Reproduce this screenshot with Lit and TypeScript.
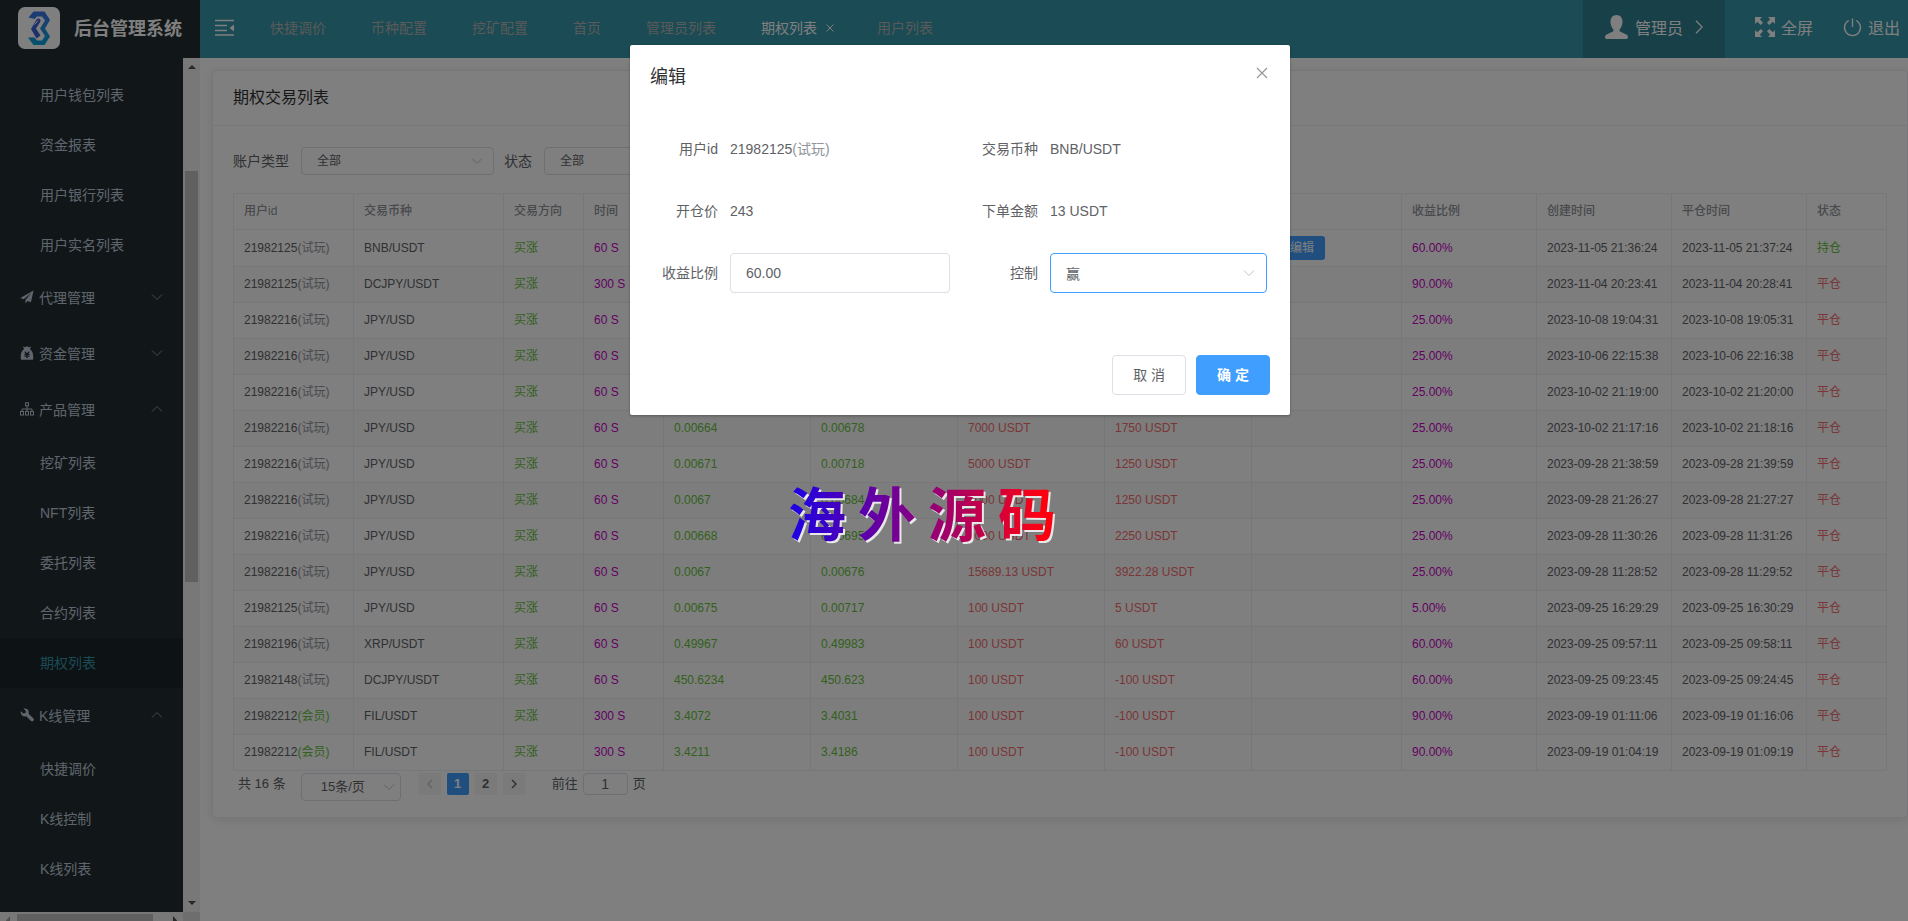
import { LitElement, html, css, svg, nothing } from "lit";
import { customElement, state } from "lit/decorators.js";
import { classMap } from "lit/directives/class-map.js";

interface Trade {
  id: string;
  kind: string;
  pair: string;
  time: string;
  open: string;
  close: string;
  amount: string;
  profit: string;
  rate: string;
  created: string;
  closed: string;
  holding?: boolean;
}

const trade = (
  id: string, pair: string, time: string, open: string, close: string,
  amount: string, profit: string, rate: string, created: string, closed: string,
  kind = "试玩", holding = false,
): Trade => ({ id, pair, time, open, close, amount, profit, rate, created, closed, kind, holding });

const TRADES: Trade[] = [
  trade("21982125", "BNB/USDT", "60 S", "243", "", "13 USDT", "", "60.00%", "2023-11-05 21:36:24", "2023-11-05 21:37:24", "试玩", true),
  trade("21982125", "DCJPY/USDT", "300 S", "", "", "", "", "90.00%", "2023-11-04 20:23:41", "2023-11-04 20:28:41"),
  trade("21982216", "JPY/USD", "60 S", "", "", "", "", "25.00%", "2023-10-08 19:04:31", "2023-10-08 19:05:31"),
  trade("21982216", "JPY/USD", "60 S", "", "", "", "", "25.00%", "2023-10-06 22:15:38", "2023-10-06 22:16:38"),
  trade("21982216", "JPY/USD", "60 S", "", "", "", "", "25.00%", "2023-10-02 21:19:00", "2023-10-02 21:20:00"),
  trade("21982216", "JPY/USD", "60 S", "0.00664", "0.00678", "7000 USDT", "1750 USDT", "25.00%", "2023-10-02 21:17:16", "2023-10-02 21:18:16"),
  trade("21982216", "JPY/USD", "60 S", "0.00671", "0.00718", "5000 USDT", "1250 USDT", "25.00%", "2023-09-28 21:38:59", "2023-09-28 21:39:59"),
  trade("21982216", "JPY/USD", "60 S", "0.0067", "0.00684", "5000 USDT", "1250 USDT", "25.00%", "2023-09-28 21:26:27", "2023-09-28 21:27:27"),
  trade("21982216", "JPY/USD", "60 S", "0.00668", "0.00695", "9000 USDT", "2250 USDT", "25.00%", "2023-09-28 11:30:26", "2023-09-28 11:31:26"),
  trade("21982216", "JPY/USD", "60 S", "0.0067", "0.00676", "15689.13 USDT", "3922.28 USDT", "25.00%", "2023-09-28 11:28:52", "2023-09-28 11:29:52"),
  trade("21982125", "JPY/USD", "60 S", "0.00675", "0.00717", "100 USDT", "5 USDT", "5.00%", "2023-09-25 16:29:29", "2023-09-25 16:30:29"),
  trade("21982196", "XRP/USDT", "60 S", "0.49967", "0.49983", "100 USDT", "60 USDT", "60.00%", "2023-09-25 09:57:11", "2023-09-25 09:58:11"),
  trade("21982148", "DCJPY/USDT", "60 S", "450.6234", "450.623", "100 USDT", "-100 USDT", "60.00%", "2023-09-25 09:23:45", "2023-09-25 09:24:45"),
  trade("21982212", "FIL/USDT", "300 S", "3.4072", "3.4031", "100 USDT", "-100 USDT", "90.00%", "2023-09-19 01:11:06", "2023-09-19 01:16:06", "会员"),
  trade("21982212", "FIL/USDT", "300 S", "3.4211", "3.4186", "100 USDT", "-100 USDT", "90.00%", "2023-09-19 01:04:19", "2023-09-19 01:09:19", "会员"),
];

const COLUMNS: [string, string][] = [
  ["用户id", "c120"], ["交易币种", "c150"], ["交易方向", "c80"], ["时间", "c80"],
  ["开仓价", "c147"], ["平仓价", "c147"], ["下单金额", "c147"], ["盈亏", "c147"],
  ["", "c150"], ["收益比例", "c135"], ["创建时间", "c135"], ["平仓时间", "c135"], ["状态", "c80"],
];

const MENU_ICONS = {
  plane: svg`<path d="M13.6.6.3 7.9l3.4 1.3L11.3 3 5.4 9.9v3.7l2.1-2.7 3.4 1.4z" fill="currentColor"/>`,
  bag: svg`<path d="M3 .6 5 1.2 7 .2l2 1 2-.6L10 3.2C12 4.6 13.200 7 13.200 10V13a.8.8 0 0 1-.8.8H1.600A.8.8 0 0 1 .8 13v-3C.8 7 2 4.600 4 3.200z" fill="currentColor"/><path d="M4.800 5.600 7 8.200l2.200-2.600M4.500 8.400h5M4.500 10.200h5M7 8.200v4" fill="none" stroke="#222d32" stroke-width="1.200"/>`,
  tree: svg`<g fill="none" stroke="currentColor" stroke-width="1"><rect x="5.500" y=".8" width="3" height="3"/><rect x=".5" y="9.500" width="3" height="3.500"/><rect x="5.500" y="9.500" width="3" height="3.500"/><rect x="10.500" y="9.500" width="3" height="3.500"/><path d="M7 4v5.500M2 9.500V7h10v2.500"/></g>`,
  wrench: svg`<path d="M.9 3.200 3.300 5.500 5.500 5 5.900 3 3.600.8C5.700.1 7.700 1 8.500 2.900c.4 1 .4 1.900.1 2.800l4.700 4.600a1.700 1.700 0 0 1-2.500 2.500L6.200 8.200C3.200 9.200-.1 6.800.9 3.200z" fill="currentColor"/>`,
};

interface MenuGroup { icon?: keyof typeof MENU_ICONS; title?: string; open?: boolean; items: string[]; }

const MENU: MenuGroup[] = [
  { items: ["用户钱包列表", "资金报表", "用户银行列表", "用户实名列表"] },
  { icon: "plane", title: "代理管理", items: [] },
  { icon: "bag", title: "资金管理", items: [] },
  { icon: "tree", title: "产品管理", open: true, items: ["挖矿列表", "NFT列表", "委托列表", "合约列表", "期权列表"] },
  { icon: "wrench", title: "K线管理", open: true, items: ["快捷调价", "K线控制", "K线列表"] },
];

const TABS = ["快捷调价", "币种配置", "挖矿配置", "首页", "管理员列表", "期权列表", "用户列表"];

const base = css`
  * { box-sizing: border-box; }
  button, input, select { font: inherit; color: inherit; margin: 0; outline: none; }
  button { cursor: pointer; padding: 0; border: 0; background: none; }
  a { color: inherit; text-decoration: none; }
  svg { display: block; flex: none; }
  .picker { position: relative; display: block; }
  .picker select {
    appearance: none; display: block; width: 100%; height: 100%;
    border: 1px solid #dcdfe6; border-radius: 4px; background: #fff; color: #606266;
  }
  .picker svg { position: absolute; top: 0; bottom: 0; margin: auto; color: #c0c4cc; pointer-events: none; }
`;

const chevron = (cls = "") => html`
  <svg class=${cls} width="12" height="8" viewBox="0 0 12 8" aria-hidden="true">
    <path d="M1 1.500 6 6.500 11 1.500" fill="none" stroke="currentColor"/>
  </svg>`;

@customElement("side-menu")
class SideMenu extends LitElement {
  static styles = [base, css`
    :host { display: grid; grid-template-columns: 183px 17px; grid-template-rows: minmax(0, 1fr) 9px; min-height: 0; }
    nav { background: #222d32; color: #bfcbd9; padding-top: 12px; overflow: hidden; }
    ul { list-style: none; margin: 0; padding: 0; }
    .item { display: flex; align-items: center; height: 50px; padding: 0 0 2px 40px; }
    .item.active { background: #1b2428; color: #3696a8; }
    .group { display: flex; align-items: center; gap: 5px; width: 100%; height: 56px; padding: 0 20px 2px; }
    .arrow { margin-left: auto; color: #909399; }
    .arrow.up { transform: rotate(180deg); }
    .bar-v { display: flex; flex-direction: column; align-items: center; background: #f1f1f1; padding: 6px 0; color: #505050; }
    .bar-v .thumb { width: 13px; background: #c1c1c1; margin-top: 101px; flex: 0 1 411px; }
    .bar-v .down { margin-top: auto; }
    .bar-h { display: flex; align-items: flex-start; background: #f1f1f1; overflow: hidden; color: #505050; }
    .bar-h .thumb { width: 136px; height: 13px; margin-top: 2px; background: #c1c1c1; }
    .bar-h svg { margin: 4px 5px; }
    .bar-h .left { color: #a3a3a3; }
    .corner { background: #dcdcdc; }
  `];

  render() {
    return html`
      <nav aria-label="主菜单">
        <ul>${MENU.map((g) => html`
          <li>
            ${g.title ? html`
              <button class="group" aria-expanded=${g.open ? "true" : "false"}>
                <svg width="14" height="14" viewBox="0 0 14 14" aria-hidden="true">${MENU_ICONS[g.icon!]}</svg>
                <span>${g.title}</span>${chevron(g.open ? "arrow up" : "arrow")}
              </button>` : nothing}
            <ul>${g.items.map((t) => html`
              <li><a href="#" class=${classMap({ item: true, active: t === "期权列表" })}>${t}</a></li>`)}
            </ul>
          </li>`)}
        </ul>
      </nav>
      <div class="bar-v">
        <svg width="8" height="6" viewBox="0 0 8 6"><path d="M0 5 4 1l4 4z" fill="currentColor"/></svg>
        <div class="thumb"></div>
        <svg class="down" width="8" height="6" viewBox="0 0 8 6"><path d="M0 1l4 4 4-4z" fill="currentColor"/></svg>
      </div>
      <div class="bar-h">
        <svg class="left" width="7" height="9" viewBox="0 0 7 9"><path d="M5 0 1 4.500 5 9z" fill="currentColor"/></svg>
        <div class="thumb"></div>
        <svg width="20" height="9" viewBox="0 0 20 9"><path d="M15 0l4 4.500L15 9z" fill="currentColor"/></svg>
      </div>
      <div class="corner"></div>`;
  }
}

@customElement("top-bar")
class TopBar extends LitElement {
  static styles = [base, css`
    :host { display: flex; height: 58px; background: #3696a8; color: #fff; }
    .brand { display: flex; align-items: center; width: 200px; flex: none; padding: 0 0 2px 18px; gap: 14px; background: #222d32; }
    .brand h1 { margin: 0; padding-bottom: 2px; font-size: 18px; font-weight: 700; white-space: nowrap; }
    .fold { padding: 0 16px 2px 15px; }
    .tabs { display: flex; }
    .tab { display: flex; align-items: center; gap: 6px; padding: 0 25px 4px 20px; color: #b4b4b4; }
    .tab.active { color: #fff; padding-right: 20px; }
    .close { width: 14px; height: 14px; padding-top: 2px; display: grid; place-items: center; }
    .tools { display: flex; align-items: center; margin-left: auto; padding-right: 8px; font-size: 16px; }
    .user { display: flex; align-items: center; gap: 7px; height: 100%; padding: 0 22px 4px; margin-right: 30px; background: rgba(0, 0, 0, 0.14); }
    .user span { margin-right: 5px; }
    .tool { display: flex; align-items: center; gap: 6px; padding-bottom: 4px; }
    .tool + .tool { margin-left: 30px; }
  `];

  render() {
    return html`
      <div class="brand">
        <svg width="42" height="42" viewBox="0 0 42 42" aria-hidden="true">
          <defs><linearGradient id="lg" x1="0" y1="0" x2="0" y2="1"><stop offset="0" stop-color="#3a72e8"/><stop offset=".4" stop-color="#2f86e0"/><stop offset="1" stop-color="#05a4dc"/></linearGradient></defs>
          <rect width="42" height="42" rx="7" fill="#fff"/>
          <path d="M10.500 10.500 15.500 4.500h11l5.500 8.500-5 8.500 5 8-5.500 8.500h-11L10 30.500h6.500l2.500 3h5l3-4.500-5-7.500 5-8-3-4h-5l-2.500 2.500z" fill="url(#lg)"/>
          <path d="M18.500 12.500c2-2 4.500-.5 4 2L18 21.500l4.500 7-4 3-5.500-9.500z" fill="#3f62d6"/>
          <path d="M16.500 17.500l3.500-4" stroke="#fff" stroke-width="1"/>
        </svg>
        <h1>后台管理系统</h1>
      </div>
      <button class="fold" aria-label="折叠菜单">
        <svg width="19" height="18" viewBox="0 0 19 18"><path d="M0 1.500h19M0 6.500h12M0 11.500h12M0 16h19" stroke="#fff" stroke-width="1.500"/><path d="M19 5.500v7L14.500 9z" fill="#fff"/></svg>
      </button>
      <nav class="tabs" aria-label="标签页">
        ${TABS.map((t) => {
          const active = t === "期权列表";
          return html`
          <a href="#" class=${classMap({ tab: true, active })}>${t}${active
            ? html`<span class="close"><svg width="8" height="8" viewBox="0 0 8 8"><path d="M.5.5l7 7M7.500.5l-7 7" stroke="#fff"/></svg></span>` : nothing}</a>`;
        })}
      </nav>
      <div class="tools">
        <button class="user">
          <svg width="23" height="24" viewBox="0 0 23 24"><path d="M11.500 0c3.800 0 6 2.800 6 6.800 0 3-1.200 6-2.900 7.600v1.800l6.700 3.200c1.100.5 1.700 1.400 1.700 2.600 0 1.200-.6 2-1.800 2H1.800C.6 24 0 23.200 0 22c0-1.200.6-2.100 1.700-2.600l6.700-3.200v-1.800C6.700 12.800 5.500 9.800 5.500 6.800 5.500 2.800 7.700 0 11.500 0z" fill="#fff"/></svg>
          <span>管理员</span>
          <svg width="8" height="14" viewBox="0 0 8 14"><path d="M1 .7 7.200 7 1 13.300" fill="none" stroke="#fff" stroke-width="1.300"/></svg>
        </button>
        <button class="tool">
          <svg width="20" height="20" viewBox="0 0 20 20"><g fill="#fff"><path d="M0 0h7L4.800 2.200 8 5.800 5.800 8 2.200 4.800 0 7z"/><path d="M20 0v7l-2.200-2.200L14.200 8 12 5.800l3.200-3.600L13 0z"/><path d="M20 20h-7l2.200-2.200L12 14.200l2.200-2.200 3.600 3.200L20 13z"/><path d="M0 20v-7l2.200 2.200L5.800 12 8 14.200l-3.200 3.600L7 20z"/></g></svg>
          <span>全屏</span>
        </button>
        <button class="tool">
          <svg width="19" height="19" viewBox="0 0 19 19"><path d="M5.800 2.500a8 8 0 1 0 7.400 0M9.500.5v8.500" fill="none" stroke="#fff" stroke-width="1.400"/></svg>
          <span>退出</span>
        </button>
      </div>`;
  }
}

@customElement("trade-card")
class TradeCard extends LitElement {
  static styles = [base, css`
    :host { display: block; border: 1px solid #ebeef5; border-radius: 4px; background: #fff; box-shadow: 0 2px 12px rgba(0, 0, 0, 0.1); }
    h2 { margin: 0; height: 55px; padding: 0 20px; border-bottom: 1px solid #ebeef5; font-size: 16px; font-weight: 400; line-height: 53px; color: #303133; }
    .body { padding: 20px; }
    .filters { display: flex; align-items: center; height: 30px; margin-bottom: 17px; }
    .filters label { margin-right: 12px; padding-bottom: 2px; color: #606266; }
    .filters .picker { width: 193px; height: 28px; margin-right: 10px; font-size: 12px; }
    .filters select { padding: 0 15px; }
    .filters svg { right: 11px; }
    table { width: 100%; table-layout: fixed; border-spacing: 0; border: 1px solid #ebeef5; border-width: 1px 0 0 1px; font-size: 12px; line-height: 23px; }
    th, td { padding: 6px 10px; border: 1px solid #ebeef5; border-width: 0 1px 1px 0; text-align: left; font-weight: 400; white-space: nowrap; }
    th { color: #909399; font-weight: 500; }
    tbody tr:nth-child(even) { background: #fafafa; }
    .c80 { width: 80px; } .c120 { width: 120px; } .c135 { width: 135px; } .c147 { width: 147px; } .c150 { width: 150px; }
    .grey { color: #909399; }
    .green { color: #67c23a; }
    .red { color: #f56c6c; }
    .purple { color: #c800c8; }
    .edit { display: block; height: 24px; margin-left: 17px; padding: 0 11px; border-radius: 3px; background: #409eff; color: #fff; }
    .pager { display: flex; align-items: flex-start; height: 26px; padding: 2px 5px 0; font-size: 13px; line-height: 22px; color: #606266; }
    .pager .picker { width: 100px; height: 28px; margin: 0 18px 0 15px; }
    .pager .picker select { padding: 0 19px; }
    .pager .picker svg { right: 6px; }
    .pages { display: flex; gap: 6px; margin-right: 27px; }
    .pages button { display: grid; place-items: center; width: 22px; height: 22px; border-radius: 2px; background: #f4f4f5; font-weight: 700; }
    .pages .current { background: #409eff; color: #fff; }
    .pages .off { color: #c0c4cc; }
    .jump { display: flex; gap: 5px; }
    .jump input { width: 45px; height: 22px; padding: 0; border: 1px solid #dcdfe6; border-radius: 4px; font-size: 14px; text-align: center; }
  `];

  render() {
    return html`
      <h2>期权交易列表</h2>
      <div class="body">
        <div class="filters">
          <label for="acct">账户类型</label>
          <span class="picker"><select id="acct"><option>全部</option></select>${chevron()}</span>
          <label for="stat">状态</label>
          <span class="picker"><select id="stat"><option>全部</option></select>${chevron()}</span>
        </div>
        <table>
          <thead><tr>${COLUMNS.map(([t, c]) => html`<th class=${c}>${t}</th>`)}</tr></thead>
          <tbody>${TRADES.map((r) => html`
            <tr>
              <td>${r.id}<span class=${r.kind === "会员" ? "green" : "grey"}>(${r.kind})</span></td>
              <td>${r.pair}</td>
              <td class="green">买涨</td>
              <td class="purple">${r.time}</td>
              <td class="green">${r.open}</td>
              <td class="green">${r.close}</td>
              <td class="red">${r.amount}</td>
              <td class="red">${r.profit}</td>
              <td>${r.holding ? html`<button class="edit">编辑</button>` : nothing}</td>
              <td class="purple">${r.rate}</td>
              <td>${r.created}</td>
              <td>${r.closed}</td>
              <td class=${r.holding ? "green" : "red"}>${r.holding ? "持仓" : "平仓"}</td>
            </tr>`)}
          </tbody>
        </table>
        <div class="pager">
          <span>共 16 条</span>
          <span class="picker"><select aria-label="每页条数"><option>15条/页</option></select>${chevron()}</span>
          <div class="pages">
            <button class="off" aria-label="上一页"><svg width="6" height="10" viewBox="0 0 6 10"><path d="M5 1 1 5l4 4" fill="none" stroke="currentColor" stroke-width="1.500"/></svg></button>
            <button class="current">1</button>
            <button>2</button>
            <button aria-label="下一页"><svg width="6" height="10" viewBox="0 0 6 10"><path d="M1 1l4 4-4 4" fill="none" stroke="currentColor" stroke-width="1.500"/></svg></button>
          </div>
          <label class="jump">前往<input value="1" />页</label>
        </div>
      </div>`;
  }
}

@customElement("edit-dialog")
class EditDialog extends LitElement {
  static styles = [base, css`
    :host { display: block; width: 660px; background: #fff; border-radius: 2px; box-shadow: 0 1px 3px rgba(0, 0, 0, 0.3); color: #606266; }
    header { display: flex; justify-content: space-between; padding: 20px 22px 10px 20px; height: 54px; }
    h2 { margin: 0; font-size: 18px; font-weight: 400; line-height: 24px; color: #303133; }
    .x { width: 12px; height: 16px; color: #909399; }
    form { display: grid; grid-template-columns: 300px 1fr; gap: 22px 20px; padding: 30px 23px 52px 20px; }
    .field { display: grid; grid-template-columns: 68px 1fr; gap: 12px; line-height: 40px; }
    .name { text-align: right; }
    .grey { color: #909399; }
    input { width: 100%; height: 40px; padding: 0 15px; border: 1px solid #dcdfe6; border-radius: 4px; }
    .picker { height: 40px; }
    .picker select { padding: 0 15px; border-color: #409eff; }
    .picker svg { right: 12px; }
    footer { display: flex; justify-content: flex-end; gap: 10px; padding: 10px 20px 20px; }
    footer button { height: 40px; padding: 0 20px 2px; border: 1px solid #dcdfe6; border-radius: 4px; }
    footer .ok { border-color: #409eff; background: #409eff; color: #fff; font-weight: 700; }
  `];

  render() {
    return html`
      <header>
        <h2>编辑</h2>
        <button class="x" aria-label="关闭"><svg width="12" height="12" viewBox="0 0 12 12"><path d="M1 1l10 10M11 1 1 11" stroke="currentColor" stroke-width="1.100"/></svg></button>
      </header>
      <form>
        <div class="field"><span class="name">用户id</span><span>21982125<span class="grey">(试玩)</span></span></div>
        <div class="field"><span class="name">交易币种</span><span>BNB/USDT</span></div>
        <div class="field"><span class="name">开仓价</span><span>243</span></div>
        <div class="field"><span class="name">下单金额</span><span>13 USDT</span></div>
        <div class="field"><label class="name" for="rate">收益比例</label><input id="rate" value="60.00" /></div>
        <div class="field"><label class="name" for="ctl">控制</label>
          <span class="picker"><select id="ctl"><option>赢</option></select>${chevron()}</span></div>
      </form>
      <footer>
        <button>取 消</button>
        <button class="ok">确 定</button>
      </footer>`;
  }
}

@customElement("app-root")
class AppRoot extends LitElement {
  @state() private editing = true;

  static styles = [base, css`
    :host {
      position: relative; display: flex; flex-direction: column; height: 100vh; overflow: hidden;
      background: #fff; color: #606266;
      font: 14px "Liberation Sans", "Noto Sans CJK SC", sans-serif;
    }
    top-bar { flex: none; }
    .page { display: grid; grid-template-columns: 200px minmax(0, 1fr); flex: 1; min-height: 0; }
    main { padding: 12px 0 0 12px; overflow: hidden; }
    .mask { position: absolute; inset: 0; display: flex; justify-content: center; align-items: flex-start; padding: 45px 0 0 12px; background: rgba(0, 0, 0, 0.5); }
    .stamp {
      position: absolute; left: 788px; top: 476px; display: flex; gap: 12px;
      font-size: 58px; font-weight: 700; line-height: 80px; white-space: nowrap;
      color: transparent; background: linear-gradient(90deg, #1a00e6, #8b0080 50%, #ff0010 95%);
      -webkit-background-clip: text; background-clip: text;
      filter: drop-shadow(2px 2px 0 #e8e8e8); pointer-events: none;
    }
  `];

  render() {
    return html`
      <top-bar></top-bar>
      <div class="page">
        <side-menu></side-menu>
        <main><trade-card></trade-card></main>
      </div>
      ${this.editing ? html`<div class="mask"><edit-dialog role="dialog" aria-label="编辑"></edit-dialog></div>` : nothing}
      <div class="stamp">${[..."海外源码"].map((c) => html`<span>${c}</span>`)}</div>`;
  }
}
